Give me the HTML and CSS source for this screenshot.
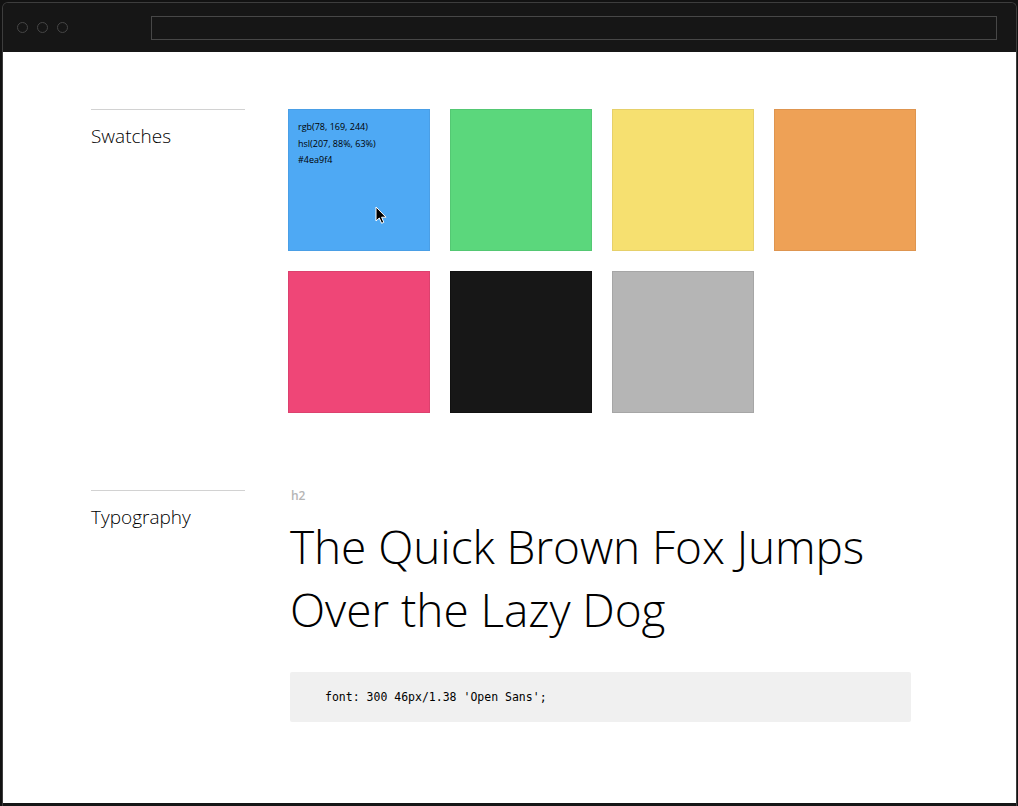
FILE: index.html
```html
<!DOCTYPE html>
<html>
<head>
<meta charset="utf-8">
<title>Style Guide</title>
<link rel="stylesheet" href="styles.css">
</head>
<body>
<div class="window">
  <div class="titlebar">
    <div class="lights">
      <span class="light"></span>
      <span class="light"></span>
      <span class="light"></span>
    </div>
    <div class="address"></div>
  </div>
  <div class="content">
    <section class="section section-swatches">
      <div class="side"><h3 class="side-title">Swatches</h3></div>
      <div class="main">
        <div class="swatches">
          <div class="swatch blue">
            <div class="swatch-info">
              <div>rgb(78, 169, 244)</div>
              <div>hsl(207, 88%, 63%)</div>
              <div>#4ea9f4</div>
            </div>
            <svg class="cursor" width="13" height="19" viewBox="0 0 13 19">
              <path d="M1 1 L1 15 L4.3 12 L6.6 17.3 L8.8 16.3 L6.6 11.2 L11 11.2 Z" fill="#000" stroke="#fff" stroke-width="1" stroke-linejoin="round"/>
            </svg>
          </div>
          <div class="swatch green"></div>
          <div class="swatch yellow"></div>
          <div class="swatch orange"></div>
          <div class="swatch pink"></div>
          <div class="swatch black"></div>
          <div class="swatch gray"></div>
        </div>
      </div>
    </section>
    <section class="section section-type">
      <div class="side"><h3 class="side-title">Typography</h3></div>
      <div class="main">
        <div class="type-label">h2</div>
        <h2 class="type-sample">The Quick Brown Fox Jumps Over the Lazy Dog</h2>
        <pre class="code">font: 300 46px/1.38 'Open Sans';</pre>
      </div>
    </section>
  </div>
</div>
</body>
</html>
```
FILE: styles.css
```css
html, body {
  margin: 0;
  padding: 0;
  background: #121212;
}

.window {
  box-sizing: border-box;
  margin: 2px 1px 0 2px;
  height: 804px;
  border: 1px solid #3d3d3d;
  border-bottom: none;
  border-radius: 6px 6px 0 0;
  background: #161616;
  padding: 0 0 3px 0;
  display: flex;
  flex-direction: column;
  overflow: hidden;
}

.titlebar {
  height: 49px;
  flex: none;
  display: flex;
  align-items: center;
  background: #161616;
}

.lights {
  display: flex;
  gap: 9px;
  padding-left: 14px;
  width: 134px;
  box-sizing: border-box;
}

.light {
  width: 11px;
  height: 11px;
  border: 1px solid #464646;
  border-radius: 50%;
  box-sizing: border-box;
}

.address {
  margin-left: 14px;
  width: 846px;
  height: 24px;
  box-sizing: border-box;
  border: 1px solid #474747;
}

.content {
  flex: 1;
  background: #fff;
  padding: 57px 0 0 88px;
  font-family: "Open Sans", "Liberation Sans", sans-serif;
}

.section {
  display: flex;
}

.section-swatches {
  margin-bottom: 77px;
}

.side {
  width: 154px;
  border-top: 1px solid #d2d2d2;
  flex: none;
}

.side-title {
  margin: 14px 0 0 0;
  font-size: 19px;
  line-height: 24px;
  font-weight: 300;
  color: #000;
}

.main {
  margin-left: 43px;
  width: 628px;
}

.swatches {
  display: grid;
  grid-template-columns: repeat(4, 142px);
  grid-auto-rows: 142px;
  gap: 20px;
}

.swatch {
  position: relative;
  box-sizing: border-box;
  border: 1px solid rgba(0, 0, 0, 0.1);
}

.swatch-info {
  padding: 9px 0 0 9px;
  font-size: 9px;
  line-height: 16.5px;
  color: #000;
}

.cursor {
  position: absolute;
  left: 86px;
  top: 96px;
}

.blue { background: #4ea9f4; border-color: #4a9fe6; }
.green { background: #5bd77c; border-color: #54c873; }
.yellow { background: #f6e070; border-color: #e6d06a; }
.orange { background: #eea156; border-color: #de9550; }
.pink { background: #ef4677; border-color: #dc416e; }
.black { background: #171717; border-color: #111; }
.gray { background: #b5b5b5; border-color: #a6a6a6; }

.type-label {
  font-size: 12px;
  line-height: 12px;
  font-weight: 600;
  color: #b5b5b5;
  padding-left: 3px;
}

.type-sample {
  margin: 13px 0 0 2px;
  font-size: 46px;
  line-height: 1.38;
  font-weight: 300;
  color: #000;
  letter-spacing: -0.08px;
  max-width: 600px;
}

.code {
  margin: 30px 0 0 2px;
  width: 621px;
  height: 50px;
  box-sizing: border-box;
  background: #f0f0f0;
  border-radius: 2px;
  padding: 0 35px;
  font-family: "DejaVu Sans Mono", "Liberation Mono", monospace;
  font-size: 11.5px;
  line-height: 50px;
  color: #000;
}
```
